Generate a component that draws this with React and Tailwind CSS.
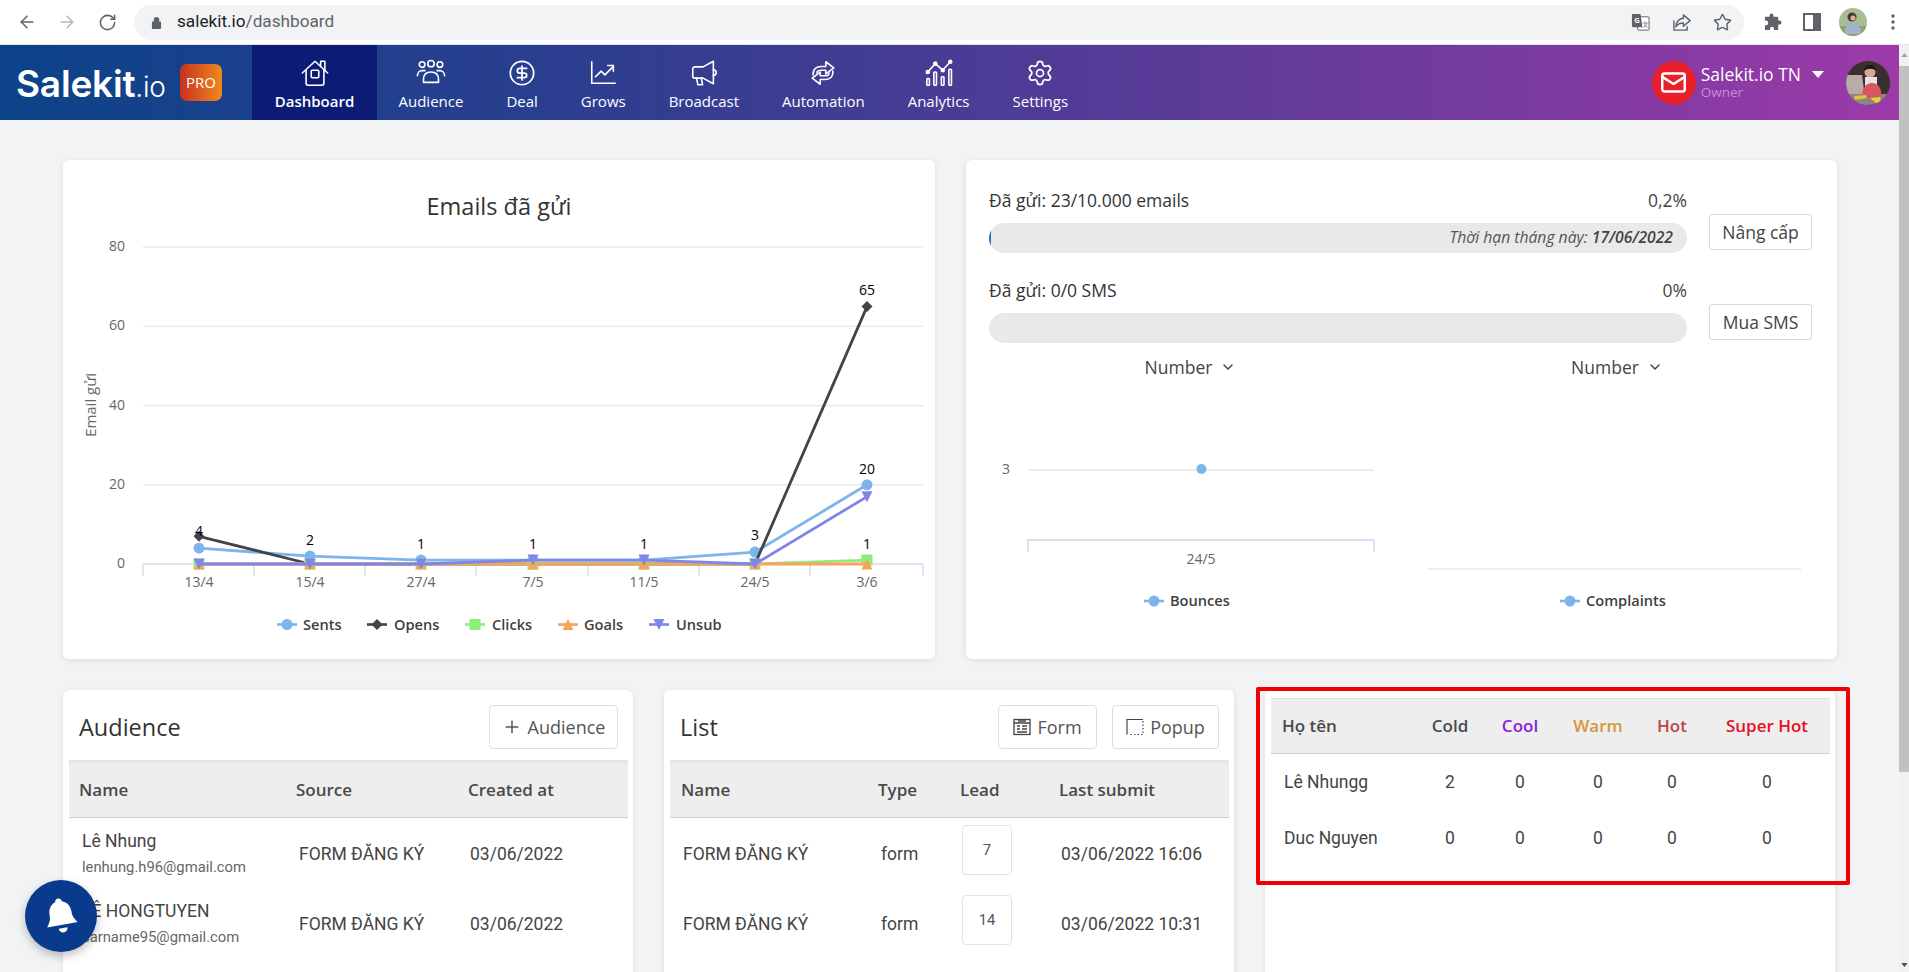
import React from "react";
import { ArrowLeft, ArrowRight, RotateCw, Star, CircleDollarSign, Settings, Mail, ChevronDown, Plus } from "lucide-react";

const C = { sents: "#7cb5ec", opens: "#434348", clicks: "#90ed7d", goals: "#f7a35c", unsub: "#8085e9" };
const xs = [199, 310, 421, 533, 644, 755, 867];
const yv = (v) => 564 - v * 3.96;
const pts = (arr) => arr.map((v, i) => `${xs[i]},${yv(v)}`).join(" ");

function Marker({ kind, x, y, color, r = 5.5 }) {
  if (kind === "circle") return <circle cx={x} cy={y} r={r} fill={color} />;
  if (kind === "diamond") return <polygon points={`${x},${y - r} ${x + r},${y} ${x},${y + r} ${x - r},${y}`} fill={color} />;
  if (kind === "square") return <rect x={x - r} y={y - r} width={r * 2} height={r * 2} fill={color} />;
  if (kind === "tri") return <polygon points={`${x},${y - r} ${x + r},${y + r} ${x - r},${y + r}`} fill={color} />;
  return <polygon points={`${x - r},${y - r} ${x + r},${y - r} ${x},${y + r}`} fill={color} />;
}

function Series({ data, color, kind }) {
  return (
    <g>
      <polyline points={pts(data)} fill="none" stroke={color} strokeWidth="2.8" strokeLinejoin="round" />
      {data.map((v, i) => <Marker key={i} kind={kind} x={xs[i]} y={yv(v)} color={color} />)}
    </g>
  );
}

function LegendItem({ x, color, kind, label, textX }) {
  return (
    <g>
      <line x1={x} x2={x + 20} y1="624.500" y2="624.500" stroke={color} strokeWidth="2.6" />
      <Marker kind={kind} x={x + 10} y={624.5} color={color} />
      <text x={textX} y="629.500" fontSize="14.6" fontWeight="600" fill="#3f3f3f">{label}</text>
    </g>
  );
}

function MainChart() {
  const grid = [0, 20, 40, 60, 80];
  const ticks = [143, 254, 365, 476, 588, 699, 810, 923];
  const labels = ["13/4", "15/4", "27/4", "7/5", "11/5", "24/5", "3/6"];
  const dl = [["4", 199, 536], ["2", 310, 545], ["1", 421, 549], ["1", 533, 549], ["1", 644, 549], ["3", 755, 540], ["65", 867, 295], ["20", 867, 474], ["1", 867, 549]];
  return (
    <svg viewBox="63 230 872 429" className="block w-[872px] h-[429px] mt-[9px]">
      {grid.map((g) => <line key={g} x1="143" x2="923" y1={yv(g)} y2={yv(g)} stroke="#e6e6e6" strokeWidth="1.2" />)}
      {grid.map((g) => <text key={g} x="125" y={yv(g) + 4} textAnchor="end" fontSize="14" fill="#666">{g}</text>)}
      <line x1="143" x2="923" y1="564" y2="564" stroke="#ccd6eb" strokeWidth="1.2" />
      {ticks.map((t) => <line key={t} x1={t} x2={t} y1="564" y2="576" stroke="#ccd6eb" strokeWidth="1.2" />)}
      {labels.map((l, i) => <text key={l} x={xs[i]} y="587" textAnchor="middle" fontSize="14" fill="#666">{l}</text>)}
      <text transform="translate(96 405) rotate(-90)" textAnchor="middle" fontSize="15" fill="#666">Email gửi</text>
      <Series data={[4, 2, 1, 1, 1, 3, 20]} color={C.sents} kind="circle" />
      <Series data={[7, 0, 0, 0, 0, 0, 65]} color={C.opens} kind="diamond" />
      <Series data={[0, 0, 0, 0, 0, 0, 1]} color={C.clicks} kind="square" />
      <Series data={[0, 0, 0, 0, 0, 0, 0]} color={C.goals} kind="tri" />
      <Series data={[0, 0, 0, 1, 1, 0, 17]} color={C.unsub} kind="inv" />
      {dl.map(([t, x, y], i) => <text key={i} x={x} y={y} textAnchor="middle" fontSize="14" fontWeight="500" fill="#000">{t}</text>)}
      <LegendItem x={277} color={C.sents} kind="circle" label="Sents" textX={303} />
      <LegendItem x={367} color={C.opens} kind="diamond" label="Opens" textX={394} />
      <LegendItem x={465} color={C.clicks} kind="square" label="Clicks" textX={492} />
      <LegendItem x={558} color={C.goals} kind="tri" label="Goals" textX={584} />
      <LegendItem x={649} color={C.unsub} kind="inv" label="Unsub" textX={676} />
    </svg>
  );
}

function Usage({ label, pct, note, btn }) {
  return (
    <div className="flex gap-[22px] mb-[25px]">
      <div className="w-[698px]">
        <div className="flex justify-between text-[17.5px] leading-[24px] text-[#333]">
          <span>{label}</span><span className="text-[#444]">{pct}</span>
        </div>
        <div className="relative mt-[11px] h-[30px] rounded-full bg-[#e9e9e9] overflow-hidden flex items-center justify-end pr-[14px]">
          {note && <div className="absolute left-0 top-0 h-full w-[2px] bg-[#2a6fb8]" />}
          {note && <span className="text-[15.7px] italic text-[#555]">Thời hạn tháng này: <b className="font-semibold text-[#444]">17/06/2022</b></span>}
        </div>
      </div>
      <button className="mt-[26px] w-[103px] h-[36px] border border-[#d9d9d9] rounded-[3px] bg-white text-[17.5px] text-[#444] whitespace-nowrap">{btn}</button>
    </div>
  );
}

function UsageCharts() {
  return (
    <div className="flex mt-[1px]">
      <svg viewBox="966 381 442 278" className="block w-[442px] h-[278px]">
        <text x="1006" y="475" textAnchor="middle" fontSize="14" fill="#666">3</text>
        <line x1="1028" x2="1374" y1="471" y2="471" stroke="#e6e6e6" strokeWidth="1.4" />
        <circle cx="1201.5" cy="470" r="5" fill={C.sents} />
        <path d="M1028 553 V541 H1374 V553" fill="none" stroke="#ccd6eb" strokeWidth="1.4" />
        <text x="1201" y="565" textAnchor="middle" fontSize="14" fill="#666">24/5</text>
        <line x1="1144" x2="1164" y1="602" y2="602" stroke={C.sents} strokeWidth="2.6" />
        <circle cx="1154" cy="602" r="5.5" fill={C.sents} />
        <text x="1170" y="607" fontSize="14.6" fontWeight="600" fill="#3f3f3f">Bounces</text>
      </svg>
      <svg viewBox="1408 381 429 278" className="block w-[429px] h-[278px]">
        <line x1="1428" x2="1801" y1="570" y2="570" stroke="#e6e6e6" strokeWidth="1.6" />
        <line x1="1560" x2="1580" y1="602" y2="602" stroke={C.sents} strokeWidth="2.6" />
        <circle cx="1570" cy="602" r="5.5" fill={C.sents} />
        <text x="1586" y="607" fontSize="14.6" fontWeight="600" fill="#3f3f3f">Complaints</text>
      </svg>
    </div>
  );
}

function TableHead({ cols, cells, bar }) {
  return (
    <div className={`grid ${cols} ${bar} border-b border-[#cfcfcf] bg-[#eeeeee] items-center text-[17px] font-semibold text-[#4a4a4a]`}>
      {cells}
    </div>
  );
}

const AudCols = "grid-cols-[217px_172px_1fr]";
const ListCols = "grid-cols-[197px_82px_99px_1fr]";
const LeadCols = "grid-cols-[145px_68px_72px_84px_64px_1fr]";

function AudRow({ name, email }) {
  return (
    <div className={`grid ${AudCols} h-[70px] items-center font-['Roboto',sans-serif] text-[17.5px] text-[#444]`}>
      <div className="pl-[13px]">
        <div className="-mt-[3px] leading-[24px] text-[#444]">{name}</div>
        <div className="mt-[4px] text-[14.8px] leading-[20px] text-[#666] whitespace-nowrap">{email}</div>
      </div>
      <div className="pl-[13px]">FORM ĐĂNG KÝ</div>
      <div className="pl-[12px]">03/06/2022</div>
    </div>
  );
}

function ListRow({ lead, date }) {
  return (
    <div className={`grid ${ListCols} h-[70px] items-center font-['Roboto',sans-serif] text-[17.5px] text-[#444]`}>
      <div className="pl-[13px]">FORM ĐĂNG KÝ</div>
      <div className="pl-[14px]">form</div>
      <div className="pl-[13px]">
        <div className="mb-[8px] w-[50px] h-[50px] border border-[#e2e2e2] rounded-[4px] flex items-center justify-center text-[14.8px] text-[#555]">{lead}</div>
      </div>
      <div className="pl-[13px] whitespace-nowrap">{date}</div>
    </div>
  );
}

function LeadRow({ name, v }) {
  return (
    <div className={`grid ${LeadCols} h-[56px] items-center font-['Roboto',sans-serif] text-[17.5px] text-[#444]`}>
      <div className="pl-[13px]">{name}</div>
      {v.map((x, i) => <div key={i} className="text-center">{x}</div>)}
    </div>
  );
}

function Btn({ children }) {
  return <button className="h-[44px] border border-[#dedede] rounded-[4px] bg-white flex items-center justify-center text-[18px] text-[#555] whitespace-nowrap">{children}</button>;
}

function NavIcon({ children }) {
  return <svg viewBox="0 0 32 32" className="w-[30px] h-[30px]" fill="none" stroke="#fff" strokeWidth="1.7" strokeLinecap="round" strokeLinejoin="round">{children}</svg>;
}

const icons = {
  Dashboard: <NavIcon><path d="M2.5 16 16 3.5 29.5 16" /><path d="M22 9V3.5h4.5V13" /><path d="M6.5 13v14a2 2 0 0 0 2 2h15a2 2 0 0 0 2-2V13" /><rect x="12" y="13" width="8" height="8" rx="1.2" /></NavIcon>,
  Audience: <NavIcon><circle cx="6.5" cy="7" r="3" /><circle cx="16" cy="6" r="3.4" /><circle cx="25.5" cy="7" r="3" /><path d="M8 26v-3c0-5 3-8 8-8s8 3 8 8v3z" /><path d="M1.500 19c0-3.500 2.500-5.500 5-5.500h3M30.500 19c0-3.500-2.500-5.500-5-5.500h-3" /></NavIcon>,
  Grows: <NavIcon><path d="M4 4v23h25" /><path d="M8 20l6-6 4 4 8-8" /><path d="M21 8h6v6" /></NavIcon>,
  Broadcast: <NavIcon><path d="M4 11.500a2 2 0 0 1 2-2h9L26 3.500v24L15 21.500H6a2 2 0 0 1-2-2z" /><path d="M8 21.500l1.500 7h5l-1.500-7" /><path d="M26 12.500a3 3 0 0 1 0 6" /></NavIcon>,
  Automation: <NavIcon><path d="M5.500 18C5 12 9 9 14 9h5V4l8.500 6.500L19 17v-4h-5c-3 0-4.500 1.500-4.500 3" /><path d="M26.500 14c.5 6-3.500 9-8.500 9h-5v5l-8.500-6.500L13 15v4h5c3 0 4.500-1.500 4.500-3" /></NavIcon>,
  Analytics: <NavIcon><path d="M4 15l8-9 8 7 8-9" /><circle cx="4" cy="15" r="1.6" fill="#fff" /><circle cx="12" cy="6" r="1.6" fill="#fff" /><circle cx="20" cy="13" r="1.6" fill="#fff" /><circle cx="28" cy="4" r="1.6" fill="#fff" /><rect x="3" y="22" width="2.8" height="7" rx=".8" /><rect x="10.500" y="15" width="2.800" height="14" rx=".8" /><rect x="18.500" y="20" width="2.800" height="9" rx=".8" /><rect x="26.500" y="12" width="2.800" height="17" rx=".8" /></NavIcon>,
};

function NavItem({ label, icon, active }) {
  return (
    <div className={`h-full flex flex-col items-center justify-start pt-[12px] text-white text-[15px] leading-[20px] ${active ? "bg-[#0c1c74] font-semibold w-[125px]" : "px-[21.5px]"}`}>
      <div className="h-[32px] flex items-center justify-center">{icon}</div>
      <div className="mt-[2px] whitespace-nowrap">{label}</div>
    </div>
  );
}

function SmallAvatar() {
  return (
    <svg viewBox="0 0 28 28" className="w-[28px] h-[28px] rounded-full">
      <rect width="28" height="28" fill="#a9bd93" />
      <rect y="18" width="28" height="10" fill="#8da36f" />
      <circle cx="13" cy="9" r="4.500" fill="#4a3a33" />
      <path d="M6 26c0-8 3-11 8-11s8 3 8 11z" fill="#9fb3cf" />
      <circle cx="14" cy="10" r="2.500" fill="#d8b09a" />
    </svg>
  );
}

function BigAvatar() {
  return (
    <svg viewBox="0 0 44 44" className="w-[44px] h-[44px] rounded-full">
      <rect width="44" height="44" fill="#3a2f2f" />
      <path d="M0 14h16l4 30H0z" fill="#b9aba5" />
      <rect y="33" width="44" height="11" fill="#8f8480" />
      <circle cx="24" cy="11" r="5.500" fill="#d9a98e" />
      <path d="M18 10c0-8 12-8 12 0-3-3-8-3-12 0z" fill="#1d1a1a" />
      <rect x="19" y="16" width="12" height="9" fill="#e8e0e4" />
      <path d="M16 36c0-9 4-14 10-14s10 6 9 12c-3 3-14 4-19 2z" fill="#d9555f" />
      <path d="M8 35l12-1 1 3-12 2z" fill="#d9c83a" />
      <path d="M24 37l10-1 1 6h-5z" fill="#e3d22f" />
    </svg>
  );
}

function ChromeBar() {
  return (
    <div className="h-[45px] bg-white border-b border-[#dfe3ea] flex items-center pl-[17px] shrink-0">
      <ArrowLeft size={20} color="#5f6368" strokeWidth={1.8} />
      <ArrowRight size={20} color="#b5b8bb" strokeWidth={1.8} className="ml-[20px]" />
      <RotateCw size={19} color="#5f6368" strokeWidth={1.9} className="ml-[21px]" />
      <div className="ml-[17px] w-[1610px] h-[35px] rounded-full bg-[#f1f3f4] flex items-center relative">
        <svg viewBox="0 0 12 14" className="ml-[17px] w-[11px] h-[13px]"><path d="M3 6V4a3 3 0 0 1 6 0v2h1a1 1 0 0 1 1 1v6a1 1 0 0 1-1 1H2a1 1 0 0 1-1-1V7a1 1 0 0 1 1-1z" fill="#5f6368" /></svg>
        <span className="ml-[15px] text-[17.2px] text-[#202124] font-['Roboto',sans-serif]">salekit.io<span className="text-[#5f6368]">/dashboard</span></span>
        <div className="ml-auto flex items-center gap-[22px] pr-[12px]">
          <svg viewBox="0 0 20 20" className="w-[19px] h-[19px]">
            <rect x="7" y="4" width="12" height="14" rx="1" fill="#fff" stroke="#5f6368" />
            <path d="M1 2a1 1 0 0 1 1-1h8l2 14H2a1 1 0 0 1-1-1z" fill="#5f6368" />
            <text x="3.500" y="11" fontSize="8" fontWeight="700" fill="#fff">G</text>
            <text x="12" y="15" fontSize="7" fill="#5f6368">文</text>
          </svg>
          <svg viewBox="0 0 20 20" className="w-[19px] h-[19px]" fill="none" stroke="#5f6368" strokeWidth="1.5" strokeLinejoin="round">
            <path d="M2 8v10h14v-4" /><path d="M12 2l7 6-7 6v-3.500c-4 0-6 1-8 4 .5-5 3-8.500 8-9z" />
          </svg>
          <Star size={19} color="#5f6368" strokeWidth={1.8} />
        </div>
      </div>
      <div className="flex items-center">
        <svg viewBox="0 0 20 20" className="ml-[19px] w-[19px] h-[19px]"><path d="M7 2.500a2 2 0 0 1 4 0V4h4a1 1 0 0 1 1 1v3h1.500a2 2 0 0 1 0 4H16v5a1 1 0 0 1-1 1h-3.500v-1.500a2 2 0 0 0-4 0V18H3a1 1 0 0 1-1-1v-4h1a2.500 2.500 0 0 0 0-5H2V5a1 1 0 0 1 1-1h4z" fill="#5f6368" /></svg>
        <svg viewBox="0 0 18 18" className="ml-[21px] w-[18px] h-[18px]"><rect x="1" y="1" width="16" height="16" fill="none" stroke="#5f6368" strokeWidth="2" /><rect x="10" y="1" width="7" height="16" fill="#5f6368" /></svg>
        <div className="ml-[18px]"><SmallAvatar /></div>
        <svg viewBox="0 0 4 16" className="ml-[24px] w-[4px] h-[16px]"><circle cx="2" cy="2" r="1.700" fill="#5f6368" /><circle cx="2" cy="8" r="1.700" fill="#5f6368" /><circle cx="2" cy="14" r="1.700" fill="#5f6368" /></svg>
      </div>
    </div>
  );
}

function Nav() {
  return (
    <div className="h-[75px] shrink-0 flex items-stretch bg-[linear-gradient(90deg,#0c4388_0%,#2c3e8f_30%,#5a3b98_62%,#9c3aa8_100%)]">
      <div className="w-[252px] flex items-center pl-[16px]">
        <span className="mt-[1px] text-white text-[37px] leading-none font-semibold font-['Inter',sans-serif] tracking-[-0.2px]">Salekit<span className="text-[28px] font-light">.io</span></span>
        <span className="ml-auto mr-[30px] w-[42px] h-[37px] rounded-[7px] flex items-center justify-center text-white text-[15px] bg-[linear-gradient(90deg,#c9301f,#f08a1e)]">PRO</span>
      </div>
      <NavItem active label="Dashboard" icon={icons.Dashboard} />
      <NavItem label="Audience" icon={icons.Audience} />
      <NavItem label="Deal" icon={<CircleDollarSign size={28} color="#fff" strokeWidth={1.5} />} />
      <NavItem label="Grows" icon={icons.Grows} />
      <NavItem label="Broadcast" icon={icons.Broadcast} />
      <NavItem label="Automation" icon={icons.Automation} />
      <NavItem label="Analytics" icon={icons.Analytics} />
      <NavItem label="Settings" icon={<Settings size={28} color="#fff" strokeWidth={1.5} />} />
      <div className="ml-auto flex items-center pr-[9px]">
        <div className="w-[44px] h-[44px] rounded-full bg-[#e8202a] flex items-center justify-center"><Mail size={27} color="#fff" strokeWidth={2.2} /></div>
        <div className="ml-[5px] text-white leading-none">
          <div className="flex items-center text-[17.5px]">Salekit.io TN
            <svg viewBox="0 0 12 7" className="ml-[11px] w-[12px] h-[7px]"><path d="M0 0h12L6 7z" fill="#fff" /></svg>
          </div>
          <div className="mt-[2px] text-[13.5px] text-[#c98bd9]">Owner</div>
        </div>
        <div className="ml-[22px]"><BigAvatar /></div>
      </div>
    </div>
  );
}

function ScrollBar() {
  return (
    <div className="w-[10px] shrink-0 bg-[#f1f1f1] flex flex-col items-center">
      <svg viewBox="0 0 8 5" className="mt-[8px] w-[7px] h-[4px]"><path d="M4 0l4 5H0z" fill="#a3a3a3" /></svg>
      <div className="mt-[9px] w-full h-[706px] bg-[#c1c1c1]" />
      <svg viewBox="0 0 8 5" className="mt-auto mb-[5px] w-[7px] h-[4px]"><path d="M0 0h8L4 5z" fill="#505050" /></svg>
    </div>
  );
}

const Card = "bg-white rounded-[6px] shadow-[0_1px_6px_rgba(0,0,0,0.09)]";

export default function App() {
  return (
    <div className="w-[1909px] h-[972px] overflow-hidden flex flex-col bg-[#f1f3f5] font-['Open_Sans',sans-serif] text-[#333]">
      <ChromeBar />
      <div className="flex flex-1 min-h-0">
        <div className="flex-1 min-w-0 relative">
          <Nav />
          <div className="pl-[63px] pt-[40px] w-[1899px]">
            <div className="flex gap-[31px]">
              <div className={`${Card} w-[872px] h-[499px]`}>
                <div className="pt-[31px] text-center text-[23.5px] leading-[30px] text-[#333]">Emails đã gửi</div>
                <MainChart />
              </div>
              <div className={`${Card} w-[871px] h-[499px] pt-[28px]`}>
                <div className="px-[23px]">
                  <Usage label="Đã gửi: 23/10.000 emails" pct="0,2%" note btn="Nâng cấp" />
                  <Usage label="Đã gửi: 0/0 SMS" pct="0%" btn="Mua SMS" />
                </div>
                <div className="flex -mt-[13px] h-[24px] items-center text-[17.5px] text-[#444]">
                  <div className="w-[449px] flex justify-center items-center gap-[8px]">Number <ChevronDown size={16} strokeWidth={2.2} /></div>
                  <div className="w-[404px] flex justify-center items-center gap-[8px]">Number <ChevronDown size={16} strokeWidth={2.2} /></div>
                </div>
                <UsageCharts />
              </div>
            </div>

            <div className="grid grid-cols-[570px_570px_570px] gap-[31px] mt-[31px]">
              <div className={`${Card} h-[300px]`}>
                <div className="flex items-center justify-between pl-[16px] pr-[15px] pt-[15px] mb-[11px]">
                  <div className="mt-[2px] text-[23.5px] text-[#333]">Audience</div>
                  <Btn><span className="w-[127px] flex items-center justify-center gap-[6px]"><Plus size={20} strokeWidth={1.8} />Audience</span></Btn>
                </div>
                <div className="ml-[6px] mr-[5px]">
                  <TableHead cols={AudCols} bar="h-[58px] mb-[1px] border-t-[3px] border-t-[#e6e6e6]" cells={<><div className="pl-[10px]">Name</div><div className="pl-[10px]">Source</div><div className="pl-[10px]">Created at</div></>} />
                  <AudRow name="Lê Nhung" email="lenhung.h96@gmail.com" />
                  <AudRow name="LÊ HONGTUYEN" email="sarname95@gmail.com" />
                </div>
              </div>

              <div className={`${Card} h-[300px]`}>
                <div className="flex items-center pl-[16px] pr-[15px] pt-[15px] mb-[11px]">
                  <div className="mt-[2px] text-[23.5px] text-[#333] mr-auto">List</div>
                  <Btn><span className="w-[97px] flex items-center justify-center gap-[6px]">
                    <svg viewBox="0 0 18 18" className="w-[18px] h-[18px]" fill="none" stroke="#444" strokeWidth="1.3"><rect x="1" y="1.500" width="16" height="15" /><path d="M1 5h16M4 8h3M9 8h5M4 11h3M9 11h5M4 14h10M5 3h8" /></svg>Form</span></Btn>
                  <div className="ml-[15px]"><Btn><span className="w-[105px] flex items-center justify-center gap-[6px]">
                    <svg viewBox="0 0 18 18" className="w-[18px] h-[18px]" fill="none" stroke="#444" strokeWidth="1.2"><path d="M1 16.500V1.500h16" /><path d="M17 3v13.500H3" strokeDasharray="1.500 2" /></svg>Popup</span></Btn></div>
                </div>
                <div className="ml-[6px] mr-[5px]">
                  <TableHead cols={ListCols} bar="h-[58px] mb-[1px] border-t-[3px] border-t-[#e6e6e6]" cells={<><div className="pl-[11px]">Name</div><div className="pl-[11px]">Type</div><div className="pl-[11px]">Lead</div><div className="pl-[11px]">Last submit</div></>} />
                  <ListRow lead="7" date="03/06/2022 16:06" />
                  <ListRow lead="14" date="03/06/2022 10:31" />
                </div>
              </div>

              <div className={`${Card} h-[300px] relative pt-[8px]`}>
                <div className="ml-[6px] mr-[5px]">
                  <TableHead cols={LeadCols} bar="h-[56px] border-t border-t-[#e0e0e0]" cells={<>
                    <div className="pl-[11px]">Họ tên</div>
                    <div className="text-center">Cold</div>
                    <div className="text-center text-[#8a1fd8]">Cool</div>
                    <div className="text-center text-[#d8953a]">Warm</div>
                    <div className="text-center text-[#b84a4a]">Hot</div>
                    <div className="text-center text-[#e8101f]">Super Hot</div>
                  </>} />
                  <LeadRow name="Lê Nhungg" v={[2, 0, 0, 0, 0]} />
                  <LeadRow name="Duc Nguyen" v={[0, 0, 0, 0, 0]} />
                </div>
                <div className="absolute left-[-9px] top-[-3px] w-[594px] h-[198px] border-[4px] border-[#f00000] rounded-[2px] pointer-events-none" />
              </div>
            </div>
          </div>
          <div className="absolute left-[25px] top-[835px] w-[72px] h-[72px] rounded-full bg-[#0a3a8c] shadow-[0_4px_10px_rgba(0,0,0,0.25)] flex items-center justify-center">
            <svg viewBox="0 0 32 36" className="w-[36px] h-[40px] rotate-[-10deg]">
              <path d="M16 2c2 0 3 1.500 3 3 5 1.500 7 6 7 11 0 5 2 7 4 10H2c2-3 4-5 4-10 0-5 2-9.500 7-11 0-1.500 1-3 3-3z" fill="#fff" />
              <path d="M12 29h8a4 4 0 0 1-8 0z" fill="#fff" />
            </svg>
          </div>
        </div>
        <ScrollBar />
      </div>
    </div>
  );
}
